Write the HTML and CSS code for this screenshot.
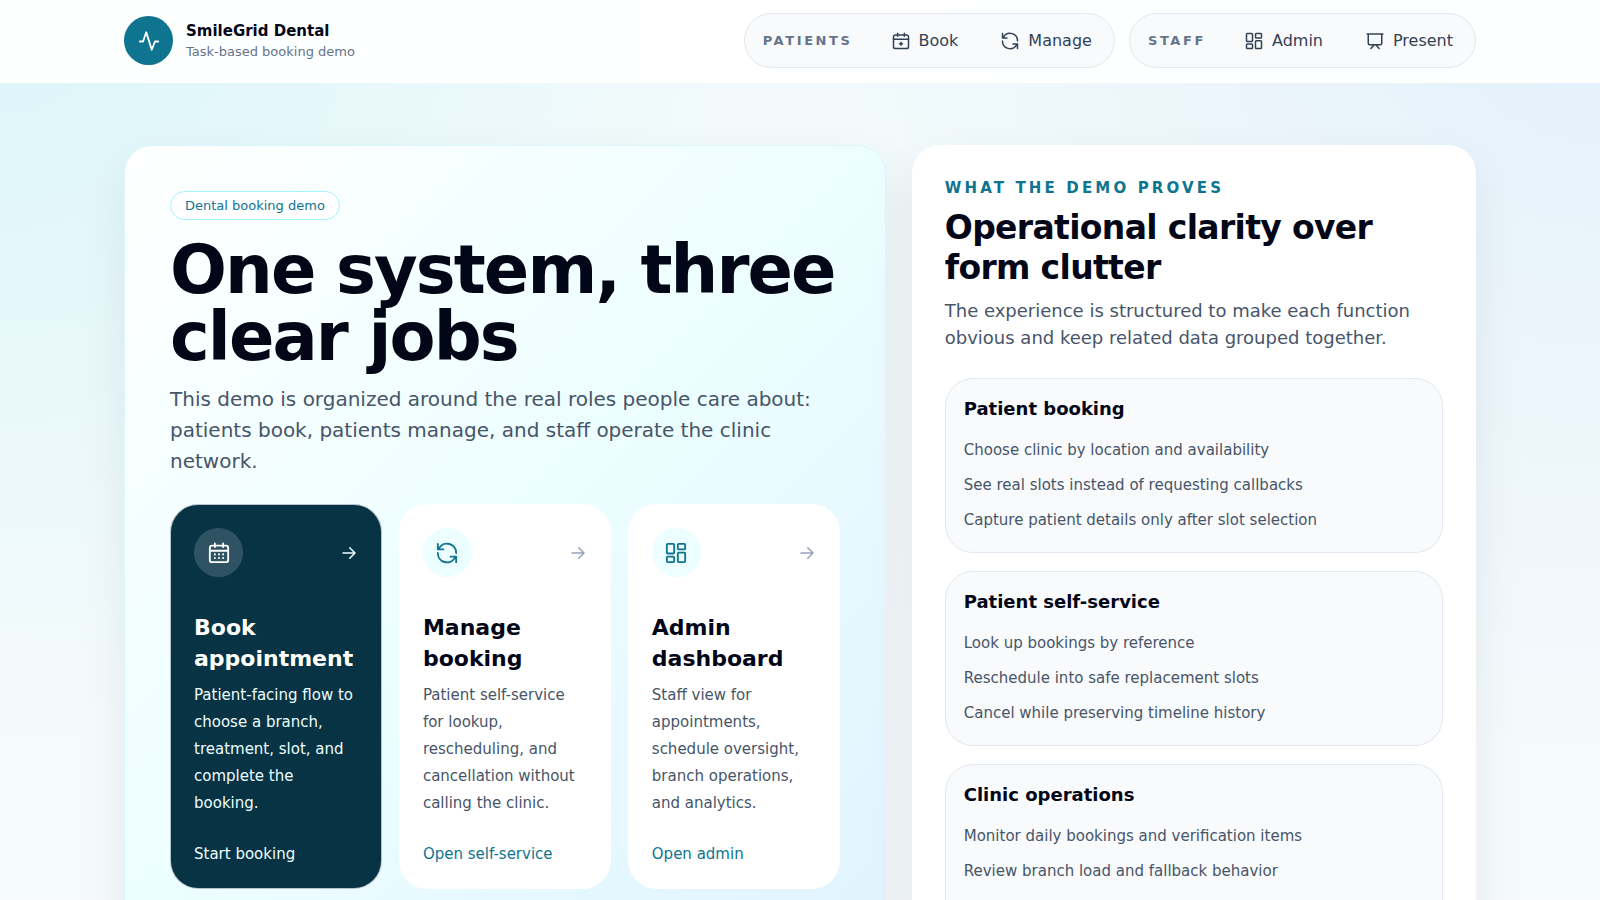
FILE: index.html
```
<!DOCTYPE html>
<html lang="en">
<head>
  <meta charset="UTF-8">
  <meta name="viewport" content="width=device-width, initial-scale=1.0">
  <title>SmileGrid Dental</title>
  <link rel="stylesheet" href="styles.css">
</head>
<body>

<!-- shared icons -->
<svg class="icon-defs" aria-hidden="true">
  <symbol id="icon-pulse" viewBox="0 0 24 24"><path d="M2 12.500h3.500L9 2.500l6 19 3.500-9H22"/></symbol>
  <symbol id="icon-book" viewBox="0 0 24 24"><rect x="2" y="4" width="20" height="18" rx="2.500"/><path d="M7.500 1.500v4M16.500 1.500v4M2 9.500h20M12 13.500v4M10 15.500h4"/></symbol>
  <symbol id="icon-calendar" viewBox="0 0 24 24"><rect x="2" y="4" width="20" height="18" rx="2.500"/><path d="M7.500 1.500v4M16.500 1.500v4M2 9.500h20"/><path d="M7.500 13.500h.01M12 13.500h.01M16.500 13.500h.01M7.500 17.500h.01M12 17.500h.01M16.500 17.500h.01" stroke-width="2.200"/></symbol>
  <symbol id="icon-refresh" viewBox="0 0 24 24"><path d="M2 12a10 10 0 0 0 18.500 5.500M22 12A10 10 0 0 0 3.500 6.500M2 2v6h6M16 16h6v6"/></symbol>
  <symbol id="icon-grid" viewBox="0 0 24 24"><rect x="2" y="2" width="8" height="10.500" rx="1"/><rect x="14" y="2" width="8" height="6" rx="1"/><rect x="14" y="11.500" width="8" height="10.500" rx="1"/><rect x="2" y="16" width="8" height="6" rx="1"/></symbol>
  <symbol id="icon-present" viewBox="0 0 24 24"><path d="M1.500 2.500h21M3 2.500v12.500a2 2 0 0 0 2 2h14a2 2 0 0 0 2-2V2.500M11 17l-4.500 5M13 17l4.500 5"/></symbol>
  <symbol id="icon-arrow" viewBox="0 0 24 24"><path d="M4 12h16M13 5l7 7-7 7"/></symbol>
</svg>

<header class="site-header">
  <div class="container header-inner">
    <a class="brand" href="#">
      <span class="brand-mark"><svg class="icon icon-lg"><use href="#icon-pulse"/></svg></span>
      <span class="brand-text">
        <strong>SmileGrid Dental</strong>
        <small>Task-based booking demo</small>
      </span>
    </a>
    <nav class="nav">
      <div class="nav-group">
        <span class="nav-label">Patients</span>
        <a class="nav-link" href="#"><svg class="icon"><use href="#icon-book"/></svg>Book</a>
        <a class="nav-link" href="#"><svg class="icon"><use href="#icon-refresh"/></svg>Manage</a>
      </div>
      <div class="nav-group">
        <span class="nav-label">Staff</span>
        <a class="nav-link" href="#"><svg class="icon"><use href="#icon-grid"/></svg>Admin</a>
        <a class="nav-link" href="#"><svg class="icon"><use href="#icon-present"/></svg>Present</a>
      </div>
    </nav>
  </div>
</header>

<main class="container hero">
  <section class="panel intro">
    <span class="chip">Dental booking demo</span>
    <h1>One system, three clear jobs</h1>
    <p class="lead">This demo is organized around the real roles people care about: patients book, patients manage, and staff operate the clinic network.</p>

    <div class="actions">
      <a class="action action-primary" href="#">
        <span class="action-top">
          <span class="action-icon"><svg class="icon icon-lg"><use href="#icon-calendar"/></svg></span>
          <svg class="icon action-arrow"><use href="#icon-arrow"/></svg>
        </span>
        <h2>Book appointment</h2>
        <p>Patient-facing flow to choose a branch, treatment, slot, and complete the booking.</p>
        <span class="action-cta">Start booking</span>
      </a>
      <a class="action" href="#">
        <span class="action-top">
          <span class="action-icon"><svg class="icon icon-lg"><use href="#icon-refresh"/></svg></span>
          <svg class="icon action-arrow"><use href="#icon-arrow"/></svg>
        </span>
        <h2>Manage booking</h2>
        <p>Patient self-service for lookup, rescheduling, and cancellation without calling the clinic.</p>
        <span class="action-cta">Open self-service</span>
      </a>
      <a class="action" href="#">
        <span class="action-top">
          <span class="action-icon"><svg class="icon icon-lg"><use href="#icon-grid"/></svg></span>
          <svg class="icon action-arrow"><use href="#icon-arrow"/></svg>
        </span>
        <h2>Admin dashboard</h2>
        <p>Staff view for appointments, schedule oversight, branch operations, and analytics.</p>
        <span class="action-cta">Open admin</span>
      </a>
    </div>
  </section>

  <section class="panel proof">
    <p class="kicker">What the demo proves</p>
    <h2 class="proof-title">Operational clarity over form clutter</h2>
    <p class="proof-lead">The experience is structured to make each function obvious and keep related data grouped together.</p>

    <div class="proof-list">
      <article class="proof-card">
        <h3>Patient booking</h3>
        <ul>
          <li>Choose clinic by location and availability</li>
          <li>See real slots instead of requesting callbacks</li>
          <li>Capture patient details only after slot selection</li>
        </ul>
      </article>
      <article class="proof-card">
        <h3>Patient self-service</h3>
        <ul>
          <li>Look up bookings by reference</li>
          <li>Reschedule into safe replacement slots</li>
          <li>Cancel while preserving timeline history</li>
        </ul>
      </article>
      <article class="proof-card">
        <h3>Clinic operations</h3>
        <ul>
          <li>Monitor daily bookings and verification items</li>
          <li>Review branch load and fallback behavior</li>
        </ul>
      </article>
    </div>
  </section>
</main>

</body>
</html>
```
FILE: styles.css
```
* {
  box-sizing: border-box;
}
body {
  margin: 0;
  min-height: 100vh;
  font-family: "DejaVu Sans", sans-serif;
  font-size: 15px;
  color: #020617;
  background:
    radial-gradient(circle at top left, rgba(34, 211, 238, 0.11), transparent 38%),
    radial-gradient(circle at top right, rgba(59, 130, 246, 0.08), transparent 40%),
    linear-gradient(180deg, #f2fafb, #f6fafc);
  overflow-x: hidden;
}
h1, h2, h3, p, ul {
  margin: 0;
}
a {
  color: inherit;
  text-decoration: none;
}
.icon-defs {
  display: none;
}
.icon {
  width: 18px;
  height: 18px;
  flex-shrink: 0;
  fill: none;
  stroke: currentColor;
  stroke-width: 2;
  stroke-linecap: round;
  stroke-linejoin: round;
}
.icon-lg {
  width: 22px;
  height: 22px;
}
.container {
  max-width: 1400px;
  margin: 0 auto;
  padding: 0 24px;
}

/* header */
.site-header {
  border-bottom: 1px solid #fff;
  background: rgba(255, 255, 255, 0.94);
}
.header-inner {
  display: flex;
  align-items: center;
  justify-content: space-between;
  padding-top: 13px;
  padding-bottom: 14px;
}
.brand {
  display: flex;
  align-items: center;
  gap: 13px;
}
.brand-mark {
  display: grid;
  place-items: center;
  width: 49px;
  height: 49px;
  border-radius: 50%;
  background: #0e7490;
  color: #fff;
}
.brand-text strong,
.brand-text small {
  display: block;
}
.brand-text strong {
  font-size: 15px;
  line-height: 22px;
}
.brand-text small {
  font-size: 13px;
  line-height: 20px;
  color: #64748b;
}
.nav {
  display: flex;
  gap: 14px;
}
.nav-group {
  display: flex;
  align-items: center;
  gap: 9px;
  height: 55px;
  padding: 0 5px;
  border: 1px solid #e2e8f0;
  border-radius: 28px;
  background: #f8fafc;
}
.nav-label {
  padding: 0 13px;
  font-size: 13px;
  font-weight: bold;
  letter-spacing: 0.2em;
  text-transform: uppercase;
  color: #64748b;
}
.nav-link {
  display: flex;
  align-items: center;
  gap: 9px;
  padding: 0 17px;
  font-size: 16px;
  color: #334155;
}

/* main panels */
.hero {
  display: grid;
  grid-template-columns: 1.35fr 1fr;
  gap: 26px;
  padding-top: 62px;
  padding-bottom: 62px;
}
.panel {
  border-radius: 28px;
  box-shadow: 0 20px 50px rgba(15, 23, 42, 0.07);
}
.intro {
  padding: 45px;
  border: 1px solid #daf8fb;
  background: linear-gradient(135deg, #fff, #ecfeff 50%, #e0f2fe);
}
.chip {
  display: inline-block;
  padding: 0 14px;
  border: 1px solid #a5f3fc;
  border-radius: 15px;
  background: #fff;
  font-size: 13px;
  line-height: 27px;
  color: #0e7490;
}
h1 {
  margin-top: 17px;
  font-size: 67px;
  line-height: 67px;
  letter-spacing: -0.028em;
}
.lead {
  margin-top: 13px;
  font-size: 20px;
  line-height: 31px;
  color: #475569;
}
.actions {
  display: grid;
  grid-template-columns: repeat(3, 1fr);
  gap: 17px;
  margin-top: 27px;
}
.action {
  display: flex;
  flex-direction: column;
  padding: 23px;
  border: 1px solid #fff;
  border-radius: 28px;
  background: #fff;
}
.action-top {
  display: flex;
  align-items: center;
  justify-content: space-between;
}
.action-icon {
  display: grid;
  place-items: center;
  width: 49px;
  height: 49px;
  border-radius: 50%;
  background: #ecfeff;
  color: #0e7490;
}
.action-arrow {
  color: #94a3b8;
}
.action h2 {
  margin-top: 35px;
  font-size: 22px;
  line-height: 31px;
}
.action p {
  margin-top: 8px;
  line-height: 27px;
  color: #475569;
}
.action-cta {
  margin-top: 26px;
  line-height: 22px;
  color: #0e7490;
}
.action-primary {
  border-color: rgba(255, 255, 255, 0.7);
  background: #083344;
  color: #fff;
}
.action-primary .action-icon {
  background: rgba(255, 255, 255, 0.16);
  color: #fff;
}
.action-primary p,
.action-primary .action-cta,
.action-primary .action-arrow {
  color: #ecfeff;
}

/* right side */
.proof {
  padding: 33px;
  background: #fff;
}
.kicker {
  font-size: 15px;
  line-height: 20px;
  font-weight: bold;
  letter-spacing: 0.21em;
  text-transform: uppercase;
  color: #0e7490;
}
.proof-title {
  margin-top: 10px;
  font-size: 33px;
  line-height: 40px;
  letter-spacing: -0.02em;
}
.proof-lead {
  margin-top: 9px;
  font-size: 18px;
  line-height: 27px;
  color: #475569;
}
.proof-list {
  display: grid;
  grid-auto-rows: 1fr;
  gap: 18px;
  margin-top: 27px;
}
.proof-card {
  padding: 18px;
  border: 1px solid #e2e8f0;
  border-radius: 28px;
  background: #f8fafc;
}
.proof-card h3 {
  font-size: 18px;
  line-height: 24px;
}
.proof-card ul {
  display: grid;
  gap: 8px;
  margin-top: 16px;
  padding: 0;
  list-style: none;
}
.proof-card li {
  line-height: 27px;
  color: #475569;
}
```
